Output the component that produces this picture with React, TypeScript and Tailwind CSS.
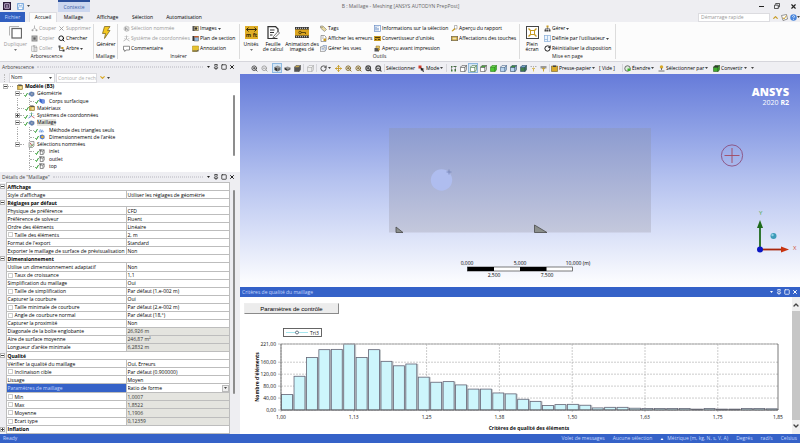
import type { ReactNode } from "react";
import clsx from "clsx";
import {
  ChevronDown,
  ChevronUp,
  Move,
  Pin,
  RotateCw,
  Search,
  Square,
  X,
  ZoomIn,
  ZoomOut,
} from "lucide-react";

/* ---------- icons ---------- */

function Svg({ size = "size-[7px]", box = "0 0 14 14", children }: { size?: string; box?: string; children: ReactNode }) {
  return (
    <svg className={clsx("shrink-0", size)} viewBox={box} fill="none" aria-hidden="true">
      {children}
    </svg>
  );
}

function Caret({ className = "text-[#444]" }: { className?: string }) {
  return (
    <svg className={clsx("h-[2px] w-[3px] shrink-0", className)} viewBox="0 0 6 4" aria-hidden="true">
      <path d="M0 0h6L3 4z" fill="currentColor" />
    </svg>
  );
}

const CutIcon = () => (
  <Svg>
    <path d="M7 1v5M7 6l-3 3M7 6l3 3" stroke="#a5a5a5" strokeWidth="1.6" />
    <circle cx="3" cy="10.5" r="2" fill="#a5a5a5" />
    <circle cx="11" cy="10.5" r="2" fill="#a5a5a5" />
  </Svg>
);

const CopyIcon = () => (
  <Svg>
    <rect x="1" y="1" width="12" height="12" fill="#8f8f8f" />
    <rect x="4" y="4" width="6" height="6" fill="#5c5c5c" stroke="#ddd" />
  </Svg>
);

const PasteIcon = () => (
  <Svg>
    <rect x="1.5" y="2" width="9" height="11" fill="#eee" stroke="#9a9a9a" />
    <path d="M4 1h4v2H4z" fill="#9a9a9a" />
    <rect x="6" y="5" width="6" height="8" fill="#ddd" stroke="#999" />
  </Svg>
);

const TreeIcon = () => (
  <Svg>
    <path d="M3 3v8h6M3 6h5" stroke="#333" strokeWidth="1.3" />
    <rect x="1" y="1" width="4" height="4" fill="#555" />
    <rect x="7" y="4" width="4" height="4" fill="#c79a22" />
    <rect x="9" y="9" width="4" height="4" fill="#333" />
  </Svg>
);

const SelectionIcon = () => (
  <Svg>
    <path d="M2 5l4-3 6 2v7l-5 2-5-3z" fill="#ddd" stroke="#aaa" />
    <path d="M5 5l5 6M5 5v6" stroke="#888" strokeWidth="1.4" />
  </Svg>
);

const AxesIcon = ({ muted = false }: { muted?: boolean }) => (
  <Svg>
    <path d="M7 8V1" stroke={muted ? "#aaa" : "#3c9b3c"} strokeWidth="1.6" />
    <path d="M7 8l6 4" stroke={muted ? "#aaa" : "#c94b4b"} strokeWidth="1.6" />
    <path d="M7 8l-6 4" stroke={muted ? "#aaa" : "#3c6cc9"} strokeWidth="1.6" />
    <path d="M3 3l8 0M2 7h3M10 7h3" stroke={muted ? "#bbb" : "#7db3d9"} />
  </Svg>
);

const CommentIcon = () => (
  <Svg>
    <path d="M1 2.5h12v7.5H6l-2.500 3V10H1z" fill="#fff" stroke="#555" strokeWidth="1.3" />
  </Svg>
);

const ImageIcon = () => (
  <Svg>
    <rect x="1" y="2" width="12" height="10" fill="#555" />
    <rect x="5" y="3" width="7" height="8" fill="#e9d48a" />
    <circle cx="8" cy="7" r="2.500" fill="#333" />
  </Svg>
);

const SectionIcon = () => (
  <Svg>
    <rect x="1" y="2" width="4" height="10" fill="#333" />
    <rect x="5" y="3" width="8" height="9" fill="#8fb8e0" stroke="#555" />
    <path d="M5 2h8v3H5z" fill="#c65f2c" />
  </Svg>
);

const NoteIcon = () => (
  <Svg>
    <path d="M1 2h12v8l-3 3H1z" fill="#e6c22e" stroke="#a88410" />
    <path d="M1 11h9l3-2v4H1z" fill="#555" />
  </Svg>
);

const TagIcon = () => (
  <Svg>
    <path d="M1 2h5l7 7-4 4-8-7z" fill="#e8d9a0" stroke="#666" />
    <circle cx="4" cy="4.500" r="1" fill="#555" />
  </Svg>
);

const PageIcon = ({ accent = "#c79a22" }: { accent?: string }) => (
  <Svg>
    <path d="M2 1h7l3 3v9H2z" fill="#fff" stroke="#666" strokeWidth="1.2" />
    <path d="M4 4h4M4 6.500h3" stroke="#888" />
    <rect x="7" y="7" width="5" height="5" fill={accent} />
  </Svg>
);

const ViewsIcon = () => (
  <Svg>
    <path d="M3 4l3-3h7v8l-3 3" fill="#dfe8f5" stroke="#5574a6" />
    <rect x="1" y="4" width="9" height="9" fill="#fff" stroke="#666" />
    <path d="M3 7h5M3 9.500h5" stroke="#5574a6" />
  </Svg>
);

const InfoIcon = () => (
  <Svg>
    <rect x="1" y="1" width="12" height="12" fill="#fff" stroke="#6c8fc7" strokeWidth="1.4" />
    <path d="M4 3v8M8 6v5M8 3v1.500" stroke="#3464ad" strokeWidth="1.6" />
  </Svg>
);

const ConvertIcon = () => (
  <Svg>
    <rect x="0" y="2" width="14" height="10" fill="#c79a22" />
    <path d="M2 5h10M2 9h3M8 9h4" stroke="#443208" strokeWidth="1.8" />
  </Svg>
);

const PrintIcon = () => (
  <Svg>
    <rect x="1" y="6" width="9" height="7" fill="#555" />
    <path d="M4 6V2h7v5" fill="#e6c86a" stroke="#8a6a18" />
    <circle cx="10" cy="9" r="2" fill="#c79a22" />
  </Svg>
);

const ReportIcon = () => (
  <Svg>
    <path d="M7 1h5v7H7z" fill="#fff" stroke="#777" />
    <path d="M1 12l6-6 2 2-6 5z" fill="#c79a22" />
  </Svg>
);

const KeyIcon = () => (
  <Svg>
    <rect x="0.500" y="2.500" width="13" height="9" fill="#c79a22" stroke="#555" />
    <rect x="3" y="5" width="8" height="4" fill="#f0e2b0" />
  </Svg>
);

const OrgIcon = () => (
  <Svg>
    <path d="M7 4v4M3 10V7h8v3" stroke="#444" />
    <rect x="5" y="1" width="4" height="4" fill="#c79a22" />
    <path d="M1 9h4v4H1zM5.500 9h3v4h-3zM9.500 9H13v4H9.500z" fill="#444" />
  </Svg>
);

const LayoutIcon = () => (
  <Svg>
    <rect x="1" y="1" width="12" height="12" fill="#eef5fd" stroke="#7fa8d6" strokeWidth="1.3" />
    <path d="M7 1v12M1 9h6" stroke="#7fa8d6" strokeWidth="1.3" />
  </Svg>
);

// solid or outlined cube, one face tinted by the kind of entity being picked
function CubeIcon({ fill = "#fff", top = "#fff", line = "#555" }: { fill?: string; top?: string; line?: string }) {
  return (
    <Svg>
      <path d="M1 4.500h9V13H1z" fill={fill} stroke={line} strokeWidth="1.2" />
      <path d="M1 4.500L4 1h9l-3 3.500z" fill={top} stroke={line} strokeWidth="1.2" />
      <path d="M13 1v8.500L10 13V4.500z" fill={fill} stroke={line} strokeWidth="1.2" />
    </Svg>
  );
}

const SolidCube = ({ flat = false }: { flat?: boolean }) => (
  <Svg>
    <path d={flat ? "M1 5l6-2 6 2-6 3z" : "M1 4l6-3 6 3-6 3z"} fill="#999" />
    <path d={flat ? "M1 5l6 3v4l-6-3z" : "M1 4l6 3v6l-6-3z"} fill="#333" />
    <path d={flat ? "M13 5L7 8v4l6-3z" : "M13 4L7 7v6l6-3z"} fill="#666" />
  </Svg>
);

const GeometryIcon = () => (
  <Svg size="h-[6px] w-[7px]">
    <path d="M1 5l5-3 7 2v6l-5 3-7-4z" fill="#6d8fc4" stroke="#3e5c8d" />
    <circle cx="8" cy="7" r="2.500" fill="#c9d8ee" stroke="#445" />
  </Svg>
);

const SurfaceIcon = () => (
  <Svg size="size-[6px]">
    <path d="M1 1l5 2 7 1v8l-6 1-6-4z" fill="#3a62c8" />
    <path d="M6 3l7 1v8l-6 1z" fill="#6f92e2" />
  </Svg>
);

const MaterialIcon = () => (
  <Svg size="size-[6px]">
    <rect x="1" y="3" width="12" height="10" fill="#d9b44a" stroke="#6c5517" />
    <path d="M2 1h8l3 3H4z" fill="#444" />
    <path d="M6 6h5v5H6z" fill="#f3e4a9" />
  </Svg>
);

const TriangleMeshIcon = () => (
  <Svg size="h-[5px] w-[7px]">
    <path d="M0 11l4-7 4 7zM6 11l3-6 4 6z" fill="#dceaff" stroke="#4d83d8" strokeWidth="1.3" />
  </Svg>
);

const SizingIcon = () => (
  <Svg size="size-[6px]">
    <path d="M2 3l6-2 5 3v6l-5 3-6-3z" fill="#4f78c6" />
    <circle cx="8" cy="7" r="3" fill="#e8b33a" />
  </Svg>
);

const NamedIcon = () => (
  <Svg size="size-[6px]">
    <path d="M3 4l3-2h6v8l-3 3H3z" fill="#fff" stroke="#444" strokeWidth="1.4" />
    <path d="M3 5h6v8M9 5l3-3M1 1h4v3H1z" stroke="#444" strokeWidth="1.2" />
  </Svg>
);

const NamedRootIcon = () => (
  <Svg size="size-[7px]">
    <path d="M2 3l3-2h7v9l-3 3H2z" fill="#eee" stroke="#555" />
    <path d="M4 4l5 6" stroke="#b33" strokeWidth="1.6" />
    <path d="M4 9l2 2 5-5" stroke="#3a9b3a" strokeWidth="1.6" />
  </Svg>
);

const CheckMark = () => (
  <svg className="mt-px h-[5px] w-[4px] shrink-0" viewBox="0 0 8 10" fill="none" aria-hidden="true">
    <path d="M1 6l2 3 4-7" stroke="#2f9a2f" strokeWidth="2" />
  </svg>
);

/* ---------- ribbon ---------- */

function SmallButton({ icon, label, caret, muted }: { icon: ReactNode; label: string; caret?: boolean; muted?: boolean }) {
  return (
    <button
      className={clsx("flex h-[9px] items-center gap-px whitespace-nowrap", muted ? "text-[#999]" : "text-black")}
    >
      {icon}
      {label}
      {caret && <Caret />}
    </button>
  );
}

function BigButton({ icon, lines, caret, muted, width }: { icon: ReactNode; lines: string[]; caret?: boolean; muted?: boolean; width: string }) {
  return (
    <button
      className={clsx("flex shrink-0 flex-col items-center pt-[2px]", width, muted ? "text-[#999]" : "text-black")}
    >
      {icon}
      <span className="mt-[3px] flex flex-col whitespace-nowrap leading-[5px]">
        {lines.map((l) => (
          <span key={l}>{l}</span>
        ))}
      </span>
      {caret && <Caret className="mt-[2px] text-[#777]" />}
    </button>
  );
}

function Column({ width, children }: { width: string; children: ReactNode }) {
  return <div className={clsx("flex shrink-0 flex-col gap-px", width)}>{children}</div>;
}

function Group({ label, width, children }: { label: string; width: string; children: ReactNode }) {
  return (
    <section className={clsx("my-[2px] flex shrink-0 flex-col border-r border-[#dcdcdc]", width)}>
      <div className="flex h-[29px]">{children}</div>
      <h2 className="text-center leading-[6px] text-[#222]">{label}</h2>
    </section>
  );
}

function Ribbon() {
  return (
    <div className="flex h-10 overflow-hidden border-b border-[#d6d6dc] bg-[#fcfcfc]">
      <Group label="Arborescence" width="w-[94px]">
        <BigButton
          muted
          caret
          width="w-[31px]"
          lines={["Dupliquer"]}
          icon={
            <Svg size="size-[13px]" box="0 0 26 26">
              <path d="M1 19V1h19" stroke="#b5b5b5" strokeWidth="2" />
              <rect x="6" y="5" width="19" height="19" fill="#fff" stroke="#666" strokeWidth="2.500" />
            </Svg>
          }
        />
        <Column width="w-[27px]">
          <SmallButton muted icon={<CutIcon />} label="Couper" />
          <SmallButton muted icon={<CopyIcon />} label="Copier" />
          <SmallButton muted icon={<PasteIcon />} label="Coller" />
        </Column>
        <Column width="w-[35px]">
          <SmallButton muted icon={<X className="size-[7px]" strokeWidth={3} />} label="Supprimer" />
          <SmallButton icon={<Search className="size-[7px]" strokeWidth={3} />} label="Chercher" />
          <SmallButton icon={<TreeIcon />} label="Arbre" caret />
        </Column>
      </Group>
      <Group label="Maillage" width="w-6">
        <BigButton
          width="w-6"
          lines={["Générer"]}
          icon={
            <Svg size="h-[13px] w-[10px]" box="0 0 20 26">
              <path d="M7 1h11l-5 8h5L7 25l2-10H3z" fill="#f4c81f" stroke="#7a6420" strokeWidth="1.5" />
            </Svg>
          }
        />
      </Group>
      <Group label="Insérer" width="w-[122px]">
        <div className="flex pl-[5px]">
          <Column width="w-[69px]">
            <SmallButton muted icon={<SelectionIcon />} label="Sélection nommée" />
            <SmallButton muted icon={<AxesIcon muted />} label="Système de coordonnées" />
            <SmallButton icon={<CommentIcon />} label="Commentaire" />
          </Column>
          <Column width="w-12">
            <SmallButton icon={<ImageIcon />} label="Images" caret />
            <SmallButton icon={<SectionIcon />} label="Plan de section" />
            <SmallButton icon={<NoteIcon />} label="Annotation" />
          </Column>
        </div>
      </Group>
      <Group label="Outils" width="w-[280px]">
        <BigButton
          caret
          width="w-[22px]"
          lines={["Unités"]}
          icon={
            <Svg size="size-[13px]" box="0 0 26 26">
              <rect width="26" height="26" fill="#dfae27" />
              <path d="M3 7h20M7 3L3 7l4 4M19 3l4 4-4 4" stroke="#3a2d08" strokeWidth="2" />
              <text x="13" y="22" textAnchor="middle" fontSize="11" fontWeight="700" fill="#3a2d08">m ft</text>
            </Svg>
          }
        />
        <BigButton
          width="w-[22px]"
          lines={["Feuille", "de calcul"]}
          icon={
            <Svg size="size-[13px]" box="0 0 26 26">
              <path d="M22 12V6l-5-5H2v24h19" stroke="#333" strokeWidth="2.500" />
              <path d="M6 8h9M6 13h8M6 18h5" stroke="#333" strokeWidth="2" />
              <path d="M13 21l9-10 3 3-9 9-4 1z" fill="#fff" stroke="#444" strokeWidth="1.500" />
            </Svg>
          }
        />
        <BigButton
          width="w-9"
          lines={["Animation des", "images clé"]}
          icon={
            <Svg size="h-[13px] w-[14px]" box="0 0 28 26">
              <rect y="2" width="28" height="22" fill="#3a3a3a" />
              <rect y="7" width="28" height="12" fill="#dca51f" />
              <path d="M2 4.500h25M2 21.500h25" stroke="#ddd" strokeWidth="2" strokeDasharray="2 2" />
              <circle cx="10" cy="13" r="2.500" stroke="#3a2d08" strokeWidth="1.500" />
              <path d="M12 13h9v3" stroke="#3a2d08" strokeWidth="1.500" />
            </Svg>
          }
        />
        <Column width="w-[54px]">
          <SmallButton icon={<TagIcon />} label="Tags" />
          <SmallButton icon={<PageIcon />} label="Afficher les erreurs" />
          <SmallButton icon={<ViewsIcon />} label="Gérer les vues" />
        </Column>
        <Column width="w-[77px]">
          <SmallButton icon={<InfoIcon />} label="Informations sur la sélection" />
          <SmallButton icon={<ConvertIcon />} label="Convertisseur d'unités" />
          <SmallButton icon={<PrintIcon />} label="Aperçu avant impression" />
        </Column>
        <Column width="w-[67px]">
          <SmallButton icon={<ReportIcon />} label="Aperçu du rapport" />
          <SmallButton icon={<KeyIcon />} label="Affectations des touches" />
        </Column>
      </Group>
      <Group label="Mise en page" width="w-24">
        <BigButton
          width="w-6"
          lines={["Plein", "écran"]}
          icon={
            <Svg size="size-[13px]" box="0 0 26 26">
              <rect x="1" y="1" width="24" height="24" fill="#fff" stroke="#444" strokeWidth="2" />
              <rect x="9" y="9" width="8" height="8" stroke="#c79a22" strokeWidth="2" />
              <path d="M5 5l4 4M21 5l-4 4M5 21l4-4M21 21l-4-4" stroke="#c79a22" strokeWidth="2.500" />
            </Svg>
          }
        />
        <Column width="w-[70px]">
          <SmallButton icon={<OrgIcon />} label="Gérer" caret />
          <SmallButton icon={<LayoutIcon />} label="Définie par l'utilisateur" caret />
          <SmallButton icon={<RotateCw className="size-[7px]" strokeWidth={3} />} label="Réinitialiser la disposition" />
        </Column>
      </Group>
    </div>
  );
}

function TitleBar() {
  return (
    <header className="flex h-3 items-center bg-[#eeeef2]">
      <div className="flex w-[58px] items-center gap-[6px] pl-[3px]">
        <Svg size="size-2">
          <rect width="14" height="14" fill="#2b1a38" />
          <path d="M3 3h8v8H3z" stroke="#d9c6e6" strokeWidth="1.500" />
          <path d="M7 5v5" stroke="#d9c6e6" strokeWidth="2" />
        </Svg>
        <button aria-label="Enregistrer" className="flex items-center gap-[3px]">
          <Svg>
            <path d="M1 1h12v12H1z" fill="#e6f1fc" stroke="#5d97d6" strokeWidth="1.500" />
            <path d="M4 1h6v4H4zM3 8h8v5H3z" fill="#fff" stroke="#5d97d6" />
          </Svg>
          <Caret />
        </button>
      </div>
      <span className="flex h-full w-8 items-center justify-center border-t-2 border-[#2b4f9b] bg-[#ccd7ef] text-[#3a5fa8]">
        Contexte
      </span>
      <h1 className="flex-1 pr-12 text-center text-[#666]">B : Maillage - Meshing [ANSYS AUTODYN PrepPost]</h1>
      <div className="flex w-[41px] items-center gap-[10px] text-[#222]">
        <button aria-label="Réduire" className="h-px w-[5px] bg-[#222]" />
        <button aria-label="Restaurer">
          <Svg size="size-[6px]">
            <path d="M4 4V1h9v8h-3M1 5h9v8H1z" stroke="#333" strokeWidth="2" />
          </Svg>
        </button>
        <button aria-label="Fermer">
          <X className="size-[7px]" strokeWidth={4} />
        </button>
      </div>
    </header>
  );
}

function Tabs() {
  return (
    <nav className="flex h-[10px] items-stretch bg-[#eeeef2] text-black">
      <button className="w-[25px] bg-[#315fc0] text-[#c9dcff]">Fichier</button>
      <button className="ml-1 w-7 border-x border-t border-[#dedee2] bg-[#fcfcfc]">Accueil</button>
      <button className="w-[33px]">Maillage</button>
      <button className="w-[35px]">Affichage</button>
      <button className="w-[35px]">Sélection</button>
      <button className="w-12">Automatisation</button>
      <div className="ml-auto flex items-center gap-[2px]">
        <input
          type="text"
          aria-label="Démarrage rapide"
          placeholder="Démarrage rapide"
          className="h-[9px] w-[72px] border border-[#dcdce0] bg-white px-[2px] placeholder:text-[#999]"
        />
        <button aria-label="Replier le ruban">
          <ChevronUp className="size-[7px] text-[#c79a22]" strokeWidth={4} />
        </button>
        <button aria-label="Options">
          <Svg>
            <path d="M1 3l10-2 2 9-9 3z" fill="#fff" stroke="#555" strokeWidth="1.2" />
            <path d="M4 7l2 3 5-7" stroke="#c79a22" strokeWidth="1.800" />
          </Svg>
        </button>
        <button aria-label="Aide" className="flex items-center">
          <Svg>
            <circle cx="7" cy="7" r="6.500" fill="#4a86dc" />
            <path d="M5 5.500c0-3 4-3 4-.5 0 1.500-2 1.500-2 3.500M7 10v1.500" stroke="#fff" strokeWidth="1.500" />
          </Svg>
          <Caret />
        </button>
      </div>
    </nav>
  );
}

/* ---------- docked panels ---------- */

function PanelButtons({ className }: { className: string }) {
  return (
    <div className={clsx("flex items-center gap-[2px]", className)}>
      <button aria-label="Menu" className="px-px"><Caret className="text-current" /></button>
      <button aria-label="Épingler"><Pin className="size-[6px]" strokeWidth={3} /></button>
      <button aria-label="Agrandir"><Square className="size-[6px]" strokeWidth={3} /></button>
      <button aria-label="Fermer"><X className="size-[6px]" strokeWidth={4} /></button>
    </div>
  );
}

function PanelTitle({ title }: { title: string }) {
  return (
    <div className="flex h-[10px] shrink-0 items-center gap-[3px] bg-[#eeeef2] pl-[2px] pr-[5px] text-[#444]">
      <h2 className="whitespace-nowrap">{title}</h2>
      <span className="h-[2px] flex-1 border-y border-dotted border-[#d2d2d8]" />
      <PanelButtons className="text-[#222]" />
    </div>
  );
}

function Expander({ open }: { open: boolean }) {
  return (
    <button
      aria-label={open ? "Réduire" : "Développer"}
      className="flex size-[5px] shrink-0 items-center justify-center border border-[#b5b5b5] bg-white"
    >
      <Svg size="size-[3px]" box="0 0 3 3">
        <path d={open ? "M0 1h3v1H0z" : "M0 1h3v1H0zM1 0h1v3H1z"} fill="#444" />
      </Svg>
    </button>
  );
}

type Node = {
  label: string;
  icon: ReactNode;
  depth: number;
  open?: boolean;
  check?: boolean;
  bold?: boolean;
  selected?: boolean;
  lastBranch?: boolean;
};

const nodes: Node[] = [
  { label: "Modèle (B3)", icon: <MaterialIcon />, depth: 0, open: true, bold: true },
  { label: "Géométrie", icon: <GeometryIcon />, depth: 1, open: true, check: true },
  { label: "Corps surfacique", icon: <SurfaceIcon />, depth: 2, check: true },
  { label: "Matériaux", icon: <MaterialIcon />, depth: 1, check: true },
  { label: "Systèmes de coordonnées", icon: <AxesIcon />, depth: 1, open: false, check: true },
  { label: "Maillage", icon: <GeometryIcon />, depth: 1, open: true, check: true, selected: true },
  { label: "Méthode des triangles seuls", icon: <TriangleMeshIcon />, depth: 2, check: true },
  { label: "Dimensionnement de l'arête", icon: <SizingIcon />, depth: 2, check: true },
  { label: "Sélections nommées", icon: <NamedRootIcon />, depth: 1, open: true },
  { label: "inlet", icon: <NamedIcon />, depth: 2, check: true, lastBranch: true },
  { label: "outlet", icon: <NamedIcon />, depth: 2, check: true, lastBranch: true },
  { label: "top", icon: <NamedIcon />, depth: 2, check: true, lastBranch: true },
];

function TreeGuides({ node }: { node: Node }) {
  const dash = <span className="h-0 flex-1 border-t border-dotted border-[#aaa]" />;
  const trunk = "self-stretch border-l border-dotted border-[#aaa]";
  if (node.depth === 0) {
    return (
      <span className="flex w-[10px] shrink-0 items-center">
        <Expander open />
        {dash}
      </span>
    );
  }
  if (node.depth === 1) {
    return (
      <span className={clsx("flex w-[21px] shrink-0 items-center self-stretch", node.open === undefined ? "pl-[14px]" : "pl-3")}>
        {node.open === undefined ? <span className={trunk} /> : <Expander open={node.open} />}
        {dash}
      </span>
    );
  }
  return (
    <span className="flex w-[31px] shrink-0 items-center self-stretch pl-[14px]">
      <span className={clsx("w-3", !node.lastBranch && trunk)} />
      <span className={trunk} />
      {dash}
    </span>
  );
}

function TreeRow({ node }: { node: Node }) {
  return (
    <li className="flex min-h-0 flex-1 items-center">
      <TreeGuides node={node} />
      <span className={clsx("flex shrink-0 items-center justify-end pr-[2px]", node.depth === 0 ? "w-3" : "w-[13px]")}>
        {node.check && <CheckMark />}
        {node.icon}
      </span>
      <span
        className={clsx(
          "whitespace-nowrap",
          node.bold && "font-bold",
          node.depth === 2 && "pl-[2px]",
          node.selected && "bg-[#e6e6e0]"
        )}
      >
        {node.label}
      </span>
    </li>
  );
}

function Outline() {
  return (
    <section className="flex h-[110px] shrink-0 flex-col bg-[#eeeef2]">
      <PanelTitle title="Arborescence" />
      <div className="flex h-[11px] shrink-0 items-center gap-px pl-1">
        <span className="mr-[3px] h-2 w-px border-l border-dotted border-[#bbb]" />
        <div className="relative flex w-[46px] items-center">
          <select
            aria-label="Filtrer par"
            className="h-[10px] w-full appearance-none border border-[#dadade] bg-white pl-px text-[#222]"
          >
            <option>Nom</option>
          </select>
          <span className="pointer-events-none absolute inset-y-0 right-[3px] flex items-center"><Caret /></span>
        </div>
        <input
          type="text"
          aria-label="Contour de recherche"
          placeholder="Contour de recherche"
          className="h-[10px] w-[41px] border border-[#dadade] bg-white pl-px placeholder:text-[#b0b0b0]"
        />
        <button aria-label="Développer la recherche" className="pl-px">
          <ChevronDown className="size-[7px] text-[#d9a927]" strokeWidth={4} />
        </button>
        <Caret />
      </div>
      <div className="flex min-h-0 flex-1 bg-white pl-[3px]">
        <ul className="flex flex-1 flex-col pb-[2px] text-black">
          {nodes.map((n) => (
            <TreeRow key={n.label} node={n} />
          ))}
        </ul>
        <div className="flex w-[10px] justify-center pb-4 pr-[2px] pt-3">
          <span className="w-[2px] rounded bg-[#8d8d8d]" />
        </div>
      </div>
    </section>
  );
}

type Detail = {
  label: string;
  value?: string;
  box?: boolean;
  grey?: boolean;
  group?: boolean;
  closed?: boolean;
  active?: boolean;
};

const details: Detail[] = [
  { label: "Affichage", group: true },
  { label: "Style d'affichage", value: "Utiliser les réglages de géométrie" },
  { label: "Réglages par défaut", group: true },
  { label: "Physique de préférence", value: "CFD" },
  { label: "Préférence de solveur", value: "Fluent" },
  { label: "Ordre des éléments", value: "Linéaire" },
  { label: "Taille des éléments", value: "2, m", box: true },
  { label: "Format de l'export", value: "Standard" },
  { label: "Exporter le maillage de surface de prévisualisation", value: "Non" },
  { label: "Dimensionnement", group: true },
  { label: "Utilise un dimensionnement adaptatif", value: "Non" },
  { label: "Taux de croissance", value: "1,1", box: true },
  { label: "Simplification du maillage", value: "Oui" },
  { label: "Taille de simplification", value: "Par défaut (1,e-002 m)", box: true },
  { label: "Capturer la courbure", value: "Oui" },
  { label: "Taille minimale de courbure", value: "Par défaut (2,e-002 m)", box: true },
  { label: "Angle de courbure normal", value: "Par défaut (18,°)", box: true },
  { label: "Capturer la proximité", value: "Non" },
  { label: "Diagonale de la boîte englobante", value: "26,926 m", grey: true },
  { label: "Aire de surface moyenne", value: "246,87 m²", grey: true },
  { label: "Longueur d'arête minimale", value: "6,2832 m", grey: true },
  { label: "Qualité", group: true },
  { label: "Vérifier la qualité du maillage", value: "Oui, Erreurs" },
  { label: "Inclinaison cible", value: "Par défaut (0.900000)", box: true },
  { label: "Lissage", value: "Moyen" },
  { label: "Paramètres de maillage", value: "Ratio de forme", active: true },
  { label: "Min", value: "1,0007", box: true, grey: true },
  { label: "Max", value: "1,8522", box: true, grey: true },
  { label: "Moyenne", value: "1,1906", box: true, grey: true },
  { label: "Ecart type", value: "0,12359", box: true, grey: true },
  { label: "Inflation", group: true, closed: true },
];

function DetailRow({ row }: { row: Detail }) {
  return (
    <tr>
      <td className="w-[6px] bg-[#eeeef2]">{row.group && <Expander open={!row.closed} />}</td>
      {row.group ? (
        <th colSpan={2} scope="rowgroup" className="border border-[#bdbdbd] pl-px text-left font-bold">
          {row.label}
        </th>
      ) : (
        <>
          <th
            scope="row"
            className={clsx(
              "w-[120px] border border-[#bdbdbd] pl-px text-left font-normal",
              row.active && "bg-[#3562c8] text-[#c5d8ff]"
            )}
          >
            {row.box ? (
              <label className="flex items-center gap-[2px]">
                <input type="checkbox" className="size-[5px] appearance-none border border-[#ccc] bg-white" />
                {row.label}
              </label>
            ) : (
              row.label
            )}
          </th>
          <td className={clsx("border border-[#bdbdbd] pl-px", row.grey && "bg-[#e4e4df] text-[#333]")}>
            {row.active ? (
              <span className="relative flex items-center">
                <select aria-label={row.label} className="h-[7px] w-full appearance-none bg-white">
                  <option>{row.value}</option>
                </select>
                <span className="pointer-events-none absolute right-0 flex h-[7px] w-[7px] items-center justify-center border border-[#bbb] bg-[#eee]">
                  <Caret />
                </span>
              </span>
            ) : (
              row.value
            )}
          </td>
        </>
      )}
    </tr>
  );
}

function Details() {
  return (
    <section className="flex min-h-0 flex-1 flex-col bg-[#eeeef2]">
      <PanelTitle title={'Détails de "Maillage"'} />
      <div className="flex min-h-0 flex-1">
        <table className="h-full flex-1 border-collapse bg-white leading-[6px] text-black">
          <tbody>
            {details.map((row) => (
              <DetailRow key={row.label} row={row} />
            ))}
          </tbody>
        </table>
        <div className="flex w-[10px] justify-center pb-10 pr-[2px] pt-2">
          <span className="w-[2px] rounded bg-[#8d8d8d]" />
        </div>
      </div>
    </section>
  );
}

/* ---------- graphics window ---------- */

function Tool({ label, on, children }: { label: string; on?: boolean; children: ReactNode }) {
  return (
    <button
      aria-label={label}
      className={clsx("flex h-[10px] w-[10px] shrink-0 items-center justify-center", on && "border border-[#8fb9e0] bg-[#d5e6f5]")}
    >
      {children}
    </button>
  );
}

function TextTool({ icon, label, caret = true, width }: { icon?: ReactNode; label: string; caret?: boolean; width: string }) {
  return (
    <button className={clsx("flex h-[10px] shrink-0 items-center gap-px whitespace-nowrap", width)}>
      {icon}
      {label}
      {caret && <Caret />}
    </button>
  );
}

const Divider = () => <span className="mx-px h-2 w-px shrink-0 bg-[#d5d5da]" />;

function GraphicsToolbar() {
  const lens = "size-[7px] text-[#444]";
  return (
    <div className="flex h-3 shrink-0 items-center overflow-hidden bg-[#efeff3] pl-[9px] text-black">
      <Tool label="Zoom avant"><ZoomIn className={lens} strokeWidth={3} /></Tool>
      <Tool label="Zoom arrière"><ZoomOut className="size-[7px] text-[#999]" strokeWidth={3} /></Tool>
      <span className="w-[3px]" />
      <Tool label="Ombré" on><SolidCube /></Tool>
      <Tool label="Arêtes"><SolidCube flat /></Tool>
      <Tool label="Épaisseur"><CubeIcon fill="#555" top="#d9b44a" /></Tool>
      <Divider />
      <Tool label="Copier la vue"><CubeIcon fill="#eee" line="#aaa" /></Tool>
      <Divider />
      <Tool label="Pivoter"><RotateCw className={lens} strokeWidth={3} /></Tool>
      <Caret />
      <span className="w-[2px]" />
      <Tool label="Déplacer"><Move className="size-[7px] text-[#c79a22]" strokeWidth={3} /></Tool>
      <Tool label="Zoom"><ZoomIn className="size-[7px] text-[#7d641f]" strokeWidth={3} /></Tool>
      <Tool label="Zoom fenêtre"><ZoomIn className="size-[7px] text-[#7d641f]" strokeWidth={3} /></Tool>
      <Tool label="Ajuster"><ZoomIn className={lens} strokeWidth={4} /></Tool>
      <Tool label="Loupe"><ZoomOut className={lens} strokeWidth={4} /></Tool>
      <Divider />
      <TextTool label="Sélectionner" caret={false} width="w-8" />
      <TextTool
        width="w-[27px]"
        label="Mode"
        icon={
          <Svg>
            <path d="M1 1h6v6H1z" fill="#d23b2a" />
            <path d="M5 5l8 3-3 1 2 4-2 1-2-4-2 2z" fill="#222" />
          </Svg>
        }
      />
      <Divider />
      <Tool label="Sélection intelligente">
        <Svg>
          <path d="M2 2h3v3H2zM8 2h5v2H8zM2 9h3v4H2zM9 8h3v5H9z" fill="#3e7d3a" />
          <path d="M3 3v8M6 3h5v8" stroke="#555" />
        </Svg>
      </Tool>
      <Tool label="Sommets"><CubeIcon /></Tool>
      <Tool label="Arêtes" on><CubeIcon line="#4c7a4a" /></Tool>
      <Tool label="Faces"><CubeIcon top="#4bb83a" /></Tool>
      <Tool label="Corps"><CubeIcon fill="#4bc832" top="#6be04f" line="#2d7d1f" /></Tool>
      <Tool label="Nœuds"><CubeIcon fill="#b9d4ef" line="#476489" /></Tool>
      <Tool label="Faces d'éléments"><CubeIcon fill="#b9d4ef" top="#3e9b35" line="#2f4966" /></Tool>
      <Tool label="Éléments"><CubeIcon fill="#3f7f4a" top="#7fb6d8" line="#2f4966" /></Tool>
      <Tool label="Étiquettes">
        <Svg>
          <path d="M1 3h3M6 3h2M10 3h3" stroke="#999" strokeWidth="1.500" />
          <path d="M7 5v8M4 6l3 3 3-3" stroke="#d3ab36" strokeWidth="1.500" />
        </Svg>
      </Tool>
      <Tool label="Annotations">
        <Svg>
          <path d="M1 2h12v5H1z" fill="#999" />
          <path d="M7 6v7M4 8l3-2 3 2" stroke="#c79a22" strokeWidth="1.800" />
        </Svg>
      </Tool>
      <Divider />
      <TextTool
        width="w-12"
        label="Presse-papier"
        icon={
          <Svg>
            <path d="M1 2h12v11H1z" fill="#d9a927" stroke="#5f4b12" />
            <path d="M4 1h6v3H4z" fill="#444" />
          </Svg>
        }
      />
      <TextTool label="[ Vide ]" caret={false} width="w-[22px]" />
      <Divider />
      <TextTool
        width="w-[34px]"
        label="Étendre"
        icon={
          <Svg>
            <circle cx="7" cy="7" r="5.500" fill="#dfeedd" stroke="#444" strokeWidth="1.500" />
            <path d="M7 7h6v5H7z" fill="#3fae2e" />
          </Svg>
        }
      />
      <TextTool
        width="w-[55px]"
        label="Sélectionner par"
        icon={
          <Svg>
            <circle cx="7" cy="4" r="3.500" fill="#d9a927" />
            <path d="M7 6v4M1 12h12" stroke="#555" strokeWidth="1.600" />
          </Svg>
        }
      />
      <TextTool width="w-[38px]" label="Convertir" icon={<CubeIcon fill="#3fae2e" top="#333" line="#2c5a24" />} />
      <Caret />
    </div>
  );
}

function Viewport() {
  return (
    <div className="relative min-h-0 flex-1 bg-linear-to-b from-[#667bd9] via-[#b5c2ef] to-white">
      <svg className="size-full" viewBox="0 0 560 213" role="img" aria-label="Géométrie 2D du domaine">
        <defs>
          <linearGradient id="plate" x1="0" y1="0" x2="0" y2="1">
            <stop offset="0" stopColor="#8c9bd0" />
            <stop offset="1" stopColor="#c4c8dc" />
          </linearGradient>
        </defs>
        <rect x="149" y="54" width="262" height="104.500" fill="url(#plate)" />
        <circle cx="201.500" cy="106" r="10.700" fill="#afbdef" />
        <path d="M206.500 98h5M209 95.500v5" stroke="#7484b8" strokeWidth="0.800" />
        <path d="M156 153v5.500h7zM294.500 151v7.500H307z" fill="#8b8f8c" stroke="#4a4a4a" strokeWidth="0.800" />

        <circle cx="492" cy="81.500" r="10.600" fill="none" stroke="#8a4f7e" strokeWidth="0.900" />
        <path d="M484.500 81.500h15M492 74v15" stroke="#a24a60" strokeWidth="0.900" />

        <rect x="227.500" y="193" width="105" height="4" fill="#fff" stroke="#444" strokeWidth="0.700" />
        <path d="M227.500 193h26.500v4h-26.500zM280 193h26.500v4H280z" fill="#000" />
        <g fontSize="5" fill="#000" textAnchor="middle">
          <text x="227" y="191">0,000</text>
          <text x="280" y="191">5,000</text>
          <text x="338" y="191">10,000 (m)</text>
          <text x="254" y="203">2,500</text>
          <text x="307" y="203">7,500</text>
        </g>

        <path d="M520 176v-24" stroke="#1f6a1a" strokeWidth="1.800" />
        <path d="M520 146l3 8h-6z" fill="#1f6a1a" />
        <path d="M520 175.500h22" stroke="#a8260c" strokeWidth="1.800" />
        <path d="M549 175.500l-8-3v6z" fill="#c8330f" />
        <circle cx="520" cy="175.500" r="3" fill="#0b16c4" />
        <circle cx="533.500" cy="162" r="3" fill="#3d9bb8" />
        <circle cx="532.500" cy="161" r="1.200" fill="#8fd3e4" />
        <text x="519" y="141" fontSize="6" fill="#4fa94a">Y</text>
        <text x="553" y="176" fontSize="6" fill="#d0573c">X</text>
      </svg>
      <div className="absolute right-[11px] top-[10px] text-right text-white">
        <p className="text-[11px] font-extrabold leading-[15px]">ANSYS</p>
        <p className="text-[7px] leading-[8px]">
          2020 <b>R2</b>
        </p>
      </div>
    </div>
  );
}

/* ---------- mesh metrics chart ---------- */

// element count per class, from 1,00 to 1,85
const counts = [
  52, 113, 176, 202, 203, 221, 176, 202, 163, 148, 154, 110, 93, 95, 84, 70, 70, 57, 54, 36,
  29, 15, 18, 19, 16, 7, 9, 9, 6, 5, 5, 5, 5, 3, 5, 3, 3, 5, 5, 4,
];

const plot = { left: 41, right: 538, top: 30, bottom: 96 };
const yTicks = [
  { value: 221, label: "221,00" },
  { value: 160, label: "160,00" },
  { value: 120, label: "120,00" },
  { value: 80, label: "80,00" },
  { value: 40, label: "40,00" },
  { value: 0, label: "0,00" },
];
const xTicks = ["1,00", "1,13", "1,25", "1,38", "1,50", "1,63", "1,75"];

function Histogram() {
  const step = (plot.right - plot.left) / counts.length;
  const y = (v: number) => plot.bottom - (v / 221) * (plot.bottom - plot.top);
  return (
    <svg className="min-h-0 w-full flex-1" viewBox="0 0 552 120" role="img" aria-label="Nombre d'éléments par ratio de forme">
      <rect x="43.500" y="14.500" width="38" height="8" fill="#fff" stroke="#555" strokeWidth="0.900" />
      <path d="M46 18.500h22" stroke="#a6e6ef" />
      <circle cx="57" cy="18.500" r="1.500" fill="#fff" stroke="#456" strokeWidth="0.800" />
      <text x="70" y="20.500" fontSize="5" fill="#111">Tri3</text>

      <rect x={plot.left} y={plot.top} width={plot.right - plot.left} height={plot.bottom - plot.top} fill="#fff" />
      {yTicks.map((t) => (
        <g key={t.label}>
          <path d={`M${plot.left} ${y(t.value)}H${plot.right}`} stroke="#aaa" strokeWidth="0.600" strokeDasharray="2 1" />
          <path d={`M${plot.left - 3} ${y(t.value)}h3`} stroke="#999" strokeWidth="0.600" />
          <text x={plot.left - 5} y={y(t.value) + 2} fontSize="5" textAnchor="end" fill="#111">
            {t.label}
          </text>
        </g>
      ))}
      {xTicks.map((label, i) => {
        const x = plot.left + i * 72.8;
        return (
          <g key={label}>
            <path d={`M${x} ${plot.top}V${plot.bottom + 2}`} stroke="#aaa" strokeWidth="0.600" strokeDasharray="2 1" />
            <text x={x} y="105" fontSize="5" textAnchor="middle" fill="#111">
              {label}
            </text>
          </g>
        );
      })}
      <text x={plot.right} y="105" fontSize="5" textAnchor="middle" fill="#111">1,85</text>

      {counts.map((n, i) => {
        const x = plot.left + 0.6 + i * step;
        return (
          <g key={i}>
            <rect x={x} y={y(n)} width={step} height={plot.bottom - y(n)} fill="#c3c7c9" />
            <rect x={x} y={y(n)} width={step - 1.5} height={plot.bottom - y(n)} fill="#cdf6fc" stroke="#667" strokeWidth="0.800" />
          </g>
        );
      })}
      <path d={`M${plot.left} ${plot.top}H${plot.right}`} stroke="#aaa" strokeWidth="1.200" />
      <path d={`M${plot.left} ${plot.top}V${plot.bottom}H${plot.right}V${plot.top}`} fill="none" stroke="#555" strokeWidth="0.800" />

      <text transform="translate(19 63) rotate(-90)" fontSize="5" fontWeight="700" textAnchor="middle" fill="#111">
        Nombre d'éléments
      </text>
      <text x="289" y="116" fontSize="5" fontWeight="700" textAnchor="middle" fill="#111">
        Critères de qualité des éléments
      </text>
    </svg>
  );
}

function Metrics() {
  return (
    <section className="flex h-[147px] shrink-0 flex-col bg-white">
      <div className="flex h-[10px] shrink-0 items-center justify-between bg-[#3562c8] pl-[2px] pr-[2px] text-[#c5d8ff]">
        <h2>Critères de qualité du maillage</h2>
        <PanelButtons className="text-white" />
      </div>
      <div className="flex min-h-0 flex-1">
        <div className="flex flex-1 flex-col">
          <button className="ml-1 mt-[6px] h-[11px] w-[95px] shrink-0 border border-b-[#8a8a8a] border-l-[#eee] border-r-[#8a8a8a] border-t-[#eee] bg-[#ececec] font-['Liberation_Sans',sans-serif] text-[6px] leading-[8px] text-black">
            Paramètres de contrôle
          </button>
          <Histogram />
        </div>
        <div className="flex w-2 flex-col items-center bg-[#f0f0f0] py-1 text-[#444]">
          <ChevronUp className="size-[8px]" strokeWidth={4} />
          <span className="my-[2px] w-full flex-1 bg-[#c6c6c6]" />
          <ChevronDown className="size-[8px]" strokeWidth={4} />
        </div>
      </div>
    </section>
  );
}

function StatusBar() {
  return (
    <footer className="flex h-[9px] shrink-0 items-center gap-2 bg-[#3562c8] px-[3px] text-[#c5d8ff]">
      <span className="flex-1">Ready</span>
      <span>Volet de messages</span>
      <span>Aucune sélection</span>
      <span className="flex items-center gap-[3px]">
        <svg className="h-[2px] w-1" viewBox="0 0 6 4" aria-hidden="true">
          <path d="M0 4h6L3 0z" fill="#fff" />
        </svg>
        Métrique (m, kg, N, s, V, A)
      </span>
      <span>Degrés</span>
      <span>rad/s</span>
      <span>Celsius</span>
    </footer>
  );
}

export default function App() {
  return (
    <div className="flex h-screen flex-col overflow-hidden bg-[#eeeef2] font-['Open_Sans',sans-serif] text-[5px] leading-[7px]">
      <TitleBar />
      <Tabs />
      <Ribbon />
      <main className="flex min-h-0 flex-1">
        <div className="flex w-[30%] shrink-0 flex-col">
          <Outline />
          <Details />
        </div>
        <div className="flex min-w-0 flex-1 flex-col">
          <GraphicsToolbar />
          <Viewport />
          <Metrics />
        </div>
      </main>
      <StatusBar />
    </div>
  );
}
